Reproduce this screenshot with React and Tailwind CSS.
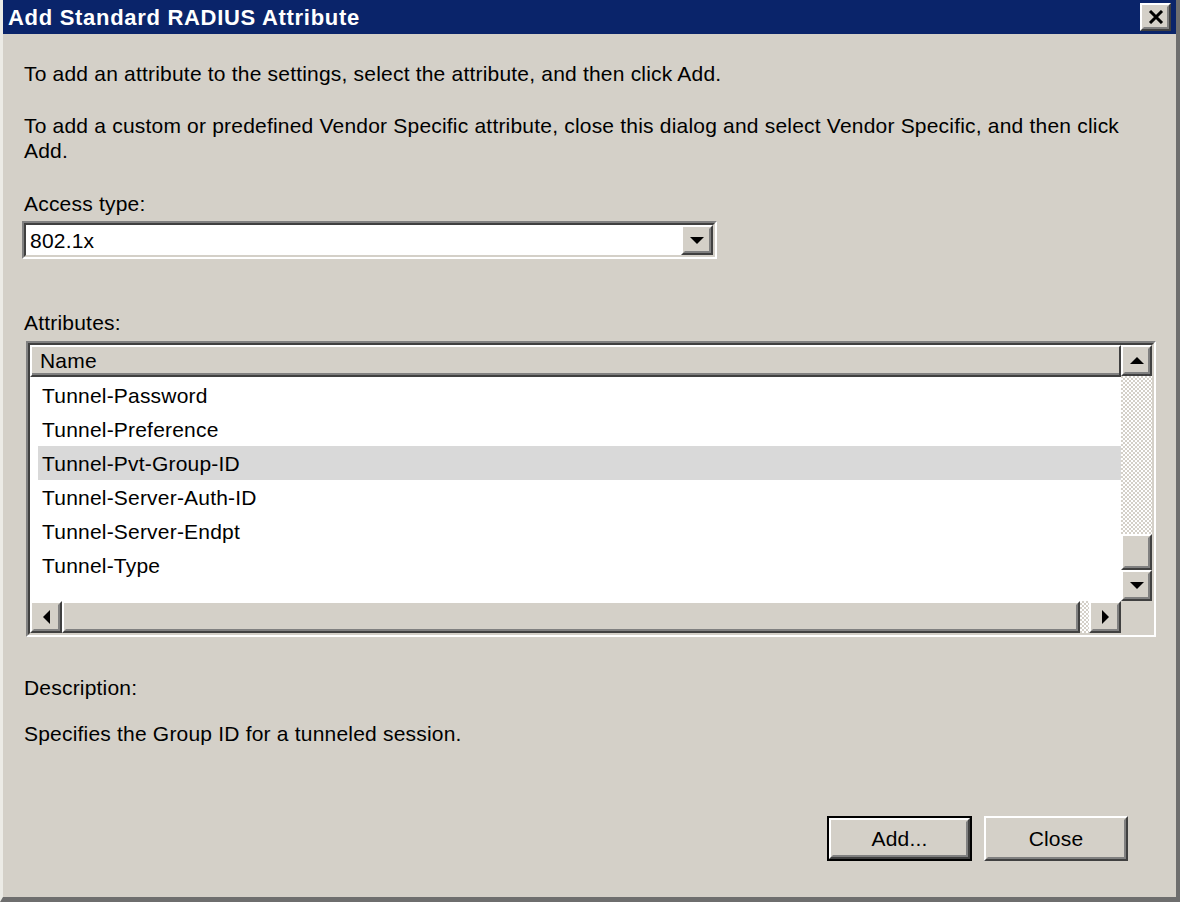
import React from 'react';

const font = { fontFamily: '"Liberation Sans", Arial, sans-serif' };

function Raised({ className = '', children }) {
  return (
    <div className={`border-2 border-t-white border-l-white border-r-[#404040] border-b-[#404040] ${className}`}>
      <div className="w-full h-full border-2 border-t-[#d4d0c8] border-l-[#d4d0c8] border-r-[#808080] border-b-[#808080] bg-[#d4d0c8] flex items-center justify-center">
        {children}
      </div>
    </div>
  );
}

function Arrow({ dir }) {
  const pts = {
    up: '1,9 8,2 15,9',
    down: '1,2 15,2 8,9',
    left: '8,1 8,15 1,8',
    right: '1,1 1,15 8,8',
  }[dir];
  const vertical = dir === 'up' || dir === 'down';
  return (
    <svg width={vertical ? 16 : 9} height={vertical ? 11 : 16} viewBox={vertical ? '0 0 16 11' : '0 0 9 16'}>
      <polygon points={pts} fill="#000" />
    </svg>
  );
}

const checker =
  'bg-[repeating-conic-gradient(#ffffff_0_25%,#d4d0c8_0_50%)] bg-[length:4px_4px]';

const rows = [
  'Tunnel-Password',
  'Tunnel-Preference',
  'Tunnel-Pvt-Group-ID',
  'Tunnel-Server-Auth-ID',
  'Tunnel-Server-Endpt',
  'Tunnel-Type',
];

export default function App() {
  return (
    <div
      className="w-[1180px] h-[902px] bg-[#d4d0c8] text-black text-[21px] tracking-[0.2px] leading-[25px] flex flex-col border-l-[3px] border-l-[#ecebe6] border-r-4 border-r-[#6e6e6e] border-b-[5px] border-b-[#6e6e6e] overflow-hidden"
      style={font}
    >
      {/* Title bar */}
      <div className="h-[34px] bg-[#0a246a] flex items-center justify-between pl-[5px] pr-[5px] shrink-0">
        <span className="text-white font-bold text-[22px] tracking-[0.7px]">Add Standard RADIUS Attribute</span>
        <Raised className="w-[31px] h-[28px]">
          <svg width="16" height="14" viewBox="0 0 16 14">
            <path d="M2 1 L14 13 M14 1 L2 13" stroke="#000" strokeWidth="3" />
          </svg>
        </Raised>
      </div>

      <div className="pl-[21px] pr-[20px] flex flex-col flex-1">
        <p className="mt-[27px]">To add an attribute to the settings, select the attribute, and then click Add.</p>
        <p className="mt-[27px] w-[1110px]">
          To add a custom or predefined Vendor Specific attribute, close this dialog and select Vendor Specific, and then click Add.
        </p>
        <p className="mt-[28px]">Access type:</p>

        {/* Combo box */}
        <div className="mt-[5px] ml-[-2px] w-[695px] h-[38px] border-2 border-t-[#808080] border-l-[#808080] border-r-white border-b-white">
          <div className="w-full h-full border-2 border-t-[#404040] border-l-[#404040] border-r-[#d4d0c8] border-b-[#d4d0c8] bg-white flex items-center">
            <span className="pl-[4px] flex-1">802.1x</span>
            <Raised className="w-[32px] h-[30px]">
              <Arrow dir="down" />
            </Raised>
          </div>
        </div>

        <p className="mt-[51px]">Attributes:</p>

        {/* List view */}
        <div className="mt-[6px] ml-[2px] w-[1130px] h-[296px] border-2 border-t-[#808080] border-l-[#808080] border-r-white border-b-white">
          <div className="w-full h-full border-2 border-t-[#404040] border-l-[#404040] border-r-[#d4d0c8] border-b-[#d4d0c8] flex">
            <div className="flex-1 flex flex-col bg-white">
              <div className="h-[32px] border-2 border-t-white border-l-white border-r-[#404040] border-b-[#404040] bg-[#d4d0c8]">
                <div className="h-full border-b-2 border-b-[#808080] pl-[8px] flex items-center">Name</div>
              </div>
              <div className="flex-1 pt-[1px] pl-[8px]">
                {rows.map((r, i) => (
                  <div
                    key={r}
                    className={`h-[34px] pl-[4px] flex items-center ${i === 2 ? 'bg-[#d9d9d9]' : ''}`}
                  >
                    {r}
                  </div>
                ))}
              </div>
              <div className={`h-[32px] flex ${checker}`}>
                <Raised className="w-[32px] h-full">
                  <Arrow dir="left" />
                </Raised>
                <Raised className="w-[1018px] h-full" />
                <div className="flex-1" />
                <Raised className="w-[32px] h-full">
                  <Arrow dir="right" />
                </Raised>
              </div>
            </div>
            <div className="w-[31px] flex flex-col">
              <Raised className="h-[31px] w-full">
                <Arrow dir="up" />
              </Raised>
              <div className={`flex-1 ${checker}`} />
              <Raised className="h-[36px] w-full" />
              <Raised className="h-[31px] w-full">
                <Arrow dir="down" />
              </Raised>
              <div className="h-[32px] bg-[#d4d0c8]" />
            </div>
          </div>
        </div>

        <p className="mt-[38px]">Description:</p>
        <p className="mt-[21px]">Specifies the Group ID for a tunneled session.</p>

        {/* Buttons */}
        <div className="mt-[70px] flex justify-end gap-[12px] pr-[28px]">
          <div className="w-[145px] h-[45px] border-2 border-black">
            <Raised className="w-full h-full">
              <span>Add...</span>
            </Raised>
          </div>
          <Raised className="w-[144px] h-[45px]">
            <span>Close</span>
          </Raised>
        </div>
      </div>
    </div>
  );
}
